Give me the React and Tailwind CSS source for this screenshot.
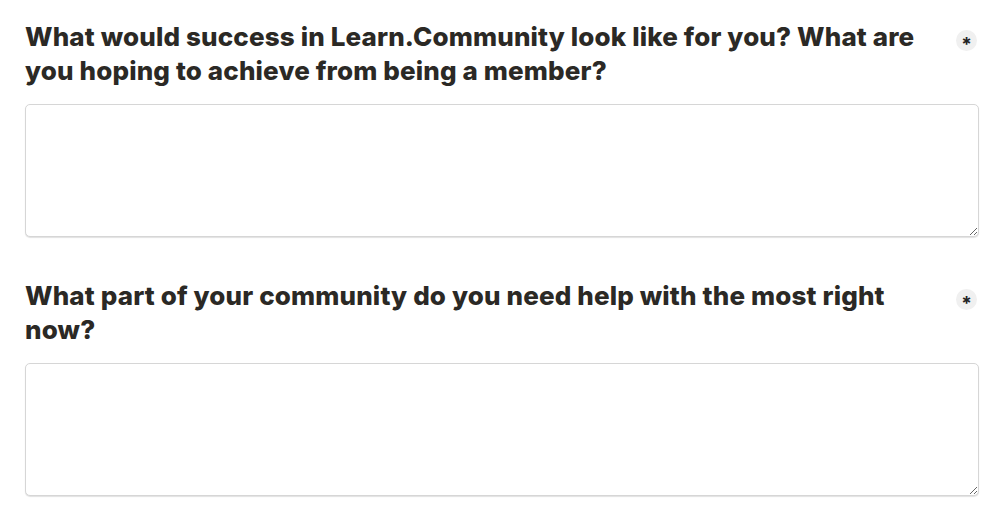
import React from 'react';

const questions = [
    { id: 'success', label: 'What would success in Learn.Community look like for you? What are you hoping to achieve from being a member?' },
    { id: 'help', label: 'What part of your community do you need help with the most right now?' },
];

const Question = ({ label }) => (
    <div className="mb-[42px]">
        <div className="flex items-start justify-between gap-4">
            <h3 className="text-[26px] leading-[34px] font-extrabold tracking-[0.15px] text-[#2b2925] max-w-[925px]">
                {label}
            </h3>
            <span className="mt-[10px] mr-[2px] w-[21px] h-[21px] rounded-full bg-[#f0f0f0] flex items-center justify-center text-[19px] font-bold text-[#222] leading-none shrink-0">
                <span className="mt-[7px]">*</span>
            </span>
        </div>
        <textarea
            className="mt-[16px] block w-full h-[133px] rounded-[5px] border border-[#d6d6d6] bg-white shadow-[0_1px_1px_rgba(0,0,0,0.12)] resize-y outline-none"
        />
    </div>
);

const App = () => {
    return (
        <div className="min-h-screen bg-white pl-[25px] pr-[21px] pt-[20px]" style={{ fontFamily: 'Inter, "Liberation Sans", sans-serif' }}>
            {questions.map((q) => (
                <Question key={q.id} label={q.label} />
            ))}
        </div>
    );
};

export default App;
